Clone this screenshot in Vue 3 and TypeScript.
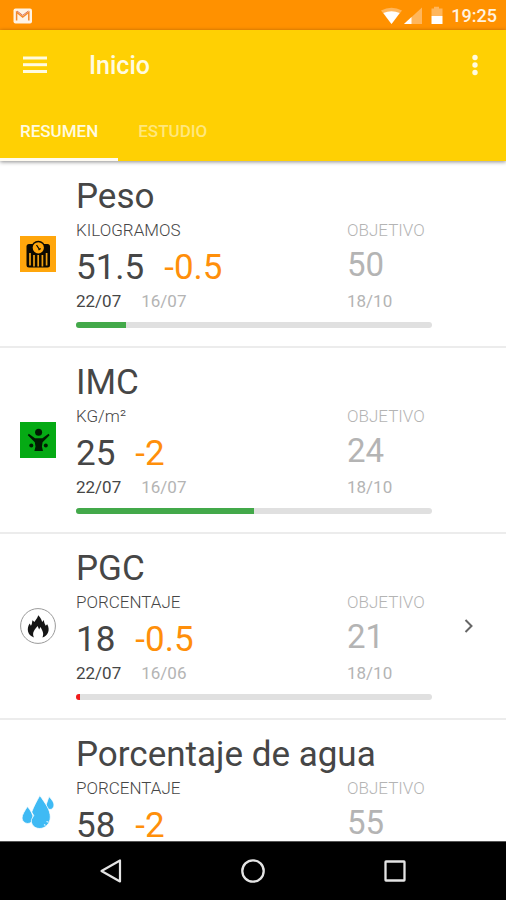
<script setup lang="ts">
import { ref } from 'vue'

type IconName = 'scale' | 'body' | 'fire' | 'water'

interface Metric {
  icon: IconName
  title: string
  unit: string
  value: string
  change: string
  date: string
  previousDate: string
  target: string
  targetDate: string
  progress: number
  tone: 'good' | 'bad'
  expandable?: boolean
}

const tabs = ['RESUMEN', 'ESTUDIO']
const activeTab = ref(0)

const metrics: Metric[] = [
  { icon: 'scale', title: 'Peso', unit: 'KILOGRAMOS', value: '51.5', change: '-0.5', date: '22/07', previousDate: '16/07', target: '50', targetDate: '18/10', progress: 14, tone: 'good' },
  { icon: 'body', title: 'IMC', unit: 'KG/m²', value: '25', change: '-2', date: '22/07', previousDate: '16/07', target: '24', targetDate: '18/10', progress: 50, tone: 'good' },
  { icon: 'fire', title: 'PGC', unit: 'PORCENTAJE', value: '18', change: '-0.5', date: '22/07', previousDate: '16/06', target: '21', targetDate: '18/10', progress: 1, tone: 'bad', expandable: true },
  { icon: 'water', title: 'Porcentaje de agua', unit: 'PORCENTAJE', value: '58', change: '-2', date: '22/07', previousDate: '16/07', target: '55', targetDate: '18/10', progress: 40, tone: 'good' },
]
</script>

<template>
  <div class="screen">
    <div class="status">
      <svg class="mail" width="20" height="16" viewBox="0 0 20 16">
        <rect x="0.5" y="0.5" width="18.5" height="15" rx="2" fill="#fff3e4" />
        <path d="M3.600 12.500V4.200L9.700 9l6.100-4.800v8.300" fill="none" stroke="#f58a2c" stroke-width="1.500" />
        <path d="M4 3l5.700 4.300L15.400 3" fill="none" stroke="#d9735a" stroke-width="1" />
      </svg>
      <div class="status-right">
        <svg width="62" height="20" viewBox="0 0 62 20">
          <path d="M0 4.500Q10.500-1 21 4.500L10.500 18z" fill="#ffb65c" />
          <path d="M2.300 7Q10.500 3.500 18.700 7L10.500 18z" fill="#fff" />
          <path d="M23 18L41 1.500V18z" fill="#ffb65c" />
          <path d="M23 18L30.500 11V18z" fill="#fff" />
          <path d="M50.500 2.500H53V0.800h5v1.700h3.500V10h-11z" fill="#ffb65c" />
          <path d="M50.500 10h11v8h-11z" fill="#fff" />
        </svg>
        <span class="clock">19:25</span>
      </div>
    </div>

    <header class="appbar">
      <div class="toolbar">
        <button class="icon-button" type="button" aria-label="Menú">
          <svg width="24" height="18" viewBox="0 0 24 18" fill="#fffbe0">
            <rect width="24" height="3" y="0.500" /><rect width="24" height="3" y="7.200" /><rect width="24" height="3" y="14" />
          </svg>
        </button>
        <h1>Inicio</h1>
        <button class="icon-button" type="button" aria-label="Más opciones">
          <svg width="8" height="22" viewBox="0 0 8 22" fill="#fffbe0">
            <circle cx="4" cy="3.500" r="2.700" /><circle cx="4" cy="11" r="2.700" /><circle cx="4" cy="18.500" r="2.700" />
          </svg>
        </button>
      </div>
      <div class="tabs" role="tablist">
        <button
          v-for="(tab, i) in tabs"
          :key="tab"
          class="tab"
          :class="{ active: i === activeTab }"
          type="button"
          role="tab"
          :aria-selected="i === activeTab"
          @click="activeTab = i"
        >{{ tab }}</button>
      </div>
    </header>

    <main class="list">
      <article v-for="m in metrics" :key="m.title" class="row">
        <svg v-if="m.icon === 'scale'" class="badge" viewBox="0 0 36 36">
          <rect width="36" height="36" fill="#ffa60c" />
          <rect x="6.500" y="8" width="23.500" height="23.500" rx="2.500" fill="#0c0900" />
          <g stroke="#f0a010" stroke-width="1.700">
            <path d="M10 17v12.500M14 19v11.500M18.200 19v11.500M22.400 19v11.500M26.600 17v12.500" />
          </g>
          <circle cx="18.300" cy="11.800" r="7" fill="#0c0900" />
          <circle cx="18.300" cy="11.800" r="5.600" fill="#ffa60c" />
          <path d="M16.500 9l3 4.500M18.500 14l2.200-1.500" stroke="#0c0900" stroke-width="1.300" />
        </svg>
        <svg v-else-if="m.icon === 'body'" class="badge" viewBox="0 0 36 36">
          <rect width="36" height="36" fill="#05aa14" />
          <g fill="#001c02">
            <circle cx="18.600" cy="10.300" r="3.500" />
            <path d="M8.800 11.800L15 16.300H22.400L28.600 11.800L29.600 13.200L22.600 20.300L21.900 24.500L23 29H14.400L15.500 24.500L14.800 20.300L7.800 13.200z" />
            <circle cx="11.300" cy="23.400" r="2" />
            <circle cx="25.800" cy="23.400" r="2" />
          </g>
        </svg>
        <svg v-else-if="m.icon === 'fire'" class="badge" viewBox="0 0 36 36">
          <circle cx="18" cy="18" r="17.400" fill="#fff" stroke="#9a9a9a" />
          <path d="M14 29.500C7 27 6.500 20 9.700 15.500l1.200 2.300c1.300-1.600 1-3.800 1.600-5.600l1.900 1.700c1.200-2 3-3.600 3.900-6.600 2.300 2.300 3.300 4.500 3.800 6.800l1.900-2c-.2 2.700 1 4 1.700 5.600l1.500-1.500c3.200 5.500.9 11.500-4.800 13.300 2-4-.2-7.400-1.900-10.500l-1.400 2.500-1.500-3.500C15 21.500 11.500 24.500 14 29.500z" fill="#151515" />
        </svg>
        <svg v-else class="badge" viewBox="0 0 36 36">
          <g fill="#3fbaf4" stroke="#fff" stroke-width="0.800">
            <path d="M29 2.500c3.500 3.800 5 6 5 8.500 0 2.700-1.900 4.500-4 4.500-2.800 0-4.300-2.500-3.700-5.200z" />
            <path d="M7.500 12.500c3.500 4.300 5.700 8.500 5.700 11.500 0 3.300-2.500 5.500-5.500 5.500S2 27 2 24c0-3 2.500-7 5.500-11.500z" />
            <path d="M19.800 1.500c6 8.500 10.500 14.500 10.500 21.500 0 6.300-4.700 11.500-10.500 11.500S10.500 30 11.500 25.500l2.200-4-2-3.500c2-5.500 4.800-10.500 8.100-16.500z" />
          </g>
          <path d="M26.500 27.500l2 .6M24 30.500l1.500 1" stroke="#d9f3ff" stroke-width="1.200" />
        </svg>

        <div class="body">
          <h2>{{ m.title }}</h2>
          <div class="columns">
            <div class="current">
              <div class="label">{{ m.unit }}</div>
              <div class="values"><span>{{ m.value }}</span><span class="change">{{ m.change }}</span></div>
              <div class="dates"><span>{{ m.date }}</span><span class="muted">{{ m.previousDate }}</span></div>
            </div>
            <div class="target">
              <div class="label">OBJETIVO</div>
              <div class="goal">{{ m.target }}</div>
              <div class="dates">{{ m.targetDate }}</div>
            </div>
          </div>
          <div class="track" role="progressbar" :aria-valuenow="m.progress" aria-valuemin="0" aria-valuemax="100" :aria-label="m.title">
            <div class="fill" :class="m.tone" :style="{ width: m.progress + '%' }"></div>
          </div>
        </div>

        <div class="action">
          <button v-if="m.expandable" class="icon-button" type="button" aria-label="Ver detalle">
            <svg width="10" height="16" viewBox="0 0 10 16"><path d="M1.500 2L7.500 8l-6 6" fill="none" stroke="#666" stroke-width="2" /></svg>
          </button>
        </div>
      </article>
    </main>

    <nav class="navbar">
      <button class="icon-button" type="button" aria-label="Atrás">
        <svg width="24" height="26" viewBox="0 0 24 26"><path d="M21 2.500v21L2.500 13z" fill="none" stroke="#e4e4e4" stroke-width="2.200" stroke-linejoin="round" /></svg>
      </button>
      <button class="icon-button" type="button" aria-label="Inicio">
        <svg width="26" height="26" viewBox="0 0 26 26"><circle cx="13" cy="13" r="10.700" fill="none" stroke="#e4e4e4" stroke-width="2.300" /></svg>
      </button>
      <button class="icon-button" type="button" aria-label="Recientes">
        <svg width="24" height="24" viewBox="0 0 24 24"><rect x="2.500" y="2.500" width="19" height="19" rx="0.500" fill="none" stroke="#e4e4e4" stroke-width="2.300" /></svg>
      </button>
    </nav>
  </div>
</template>

<style>
body {
  background: #fff;
}
</style>

<style scoped>
.screen {
  display: flex;
  flex-direction: column;
  height: 100vh;
  overflow: hidden;
  background: #fff;
  color: #464646;
  font-family: Roboto, "Liberation Sans", sans-serif;
}
svg {
  display: block;
  flex: none;
}
h1,
h2 {
  margin: 0;
}
.icon-button {
  display: grid;
  place-items: center;
  padding: 0;
  border: 0;
  background: none;
  cursor: pointer;
}
.status {
  display: flex;
  flex: none;
  align-items: center;
  justify-content: space-between;
  height: 30px;
  padding: 2px 9px 0 13px;
  box-sizing: border-box;
  background: #ff9100;
}
.status-right {
  display: flex;
  align-items: center;
  gap: 8px;
}
.clock {
  color: #fff3e0;
  font-size: 18px;
  font-weight: 500;
  line-height: 28px;
}
.appbar {
  position: relative;
  z-index: 1;
  flex: none;
  background: #ffd003;
  box-shadow: 0 1px 4px rgba(0, 0, 0, 0.45);
}
.toolbar {
  display: flex;
  align-items: center;
  height: 70px;
  padding: 0 27px 0 23px;
}
h1 {
  flex: 1;
  padding: 2px 0 0 42px;
  color: #fffbe0;
  font-size: 25px;
  font-weight: 500;
  line-height: 30px;
}
.tabs {
  display: flex;
}
.tab {
  height: 61px;
  padding: 3px 20px 0;
  border: 0;
  border-bottom: 3px solid transparent;
  background: none;
  color: #ffe77d;
  font-family: inherit;
  font-size: 17px;
  font-weight: 500;
  cursor: pointer;
}
.tab.active {
  border-color: #fffbf0;
  color: #fffbe0;
}
.list {
  flex: 1;
  min-height: 0;
  padding-top: 1px;
  overflow: auto;
  scrollbar-width: none;
}
.row {
  display: flex;
  align-items: center;
  padding: 16px 0 17px 20px;
  border-bottom: 2px solid #ececec;
}
.badge {
  width: 36px;
  height: 36px;
  margin-right: 20px;
}
.body {
  flex: 1;
  min-width: 0;
  padding-bottom: 1px;
}
h2 {
  font-size: 35px;
  font-weight: 400;
  line-height: 38px;
}
.columns {
  display: flex;
  justify-content: space-between;
}
.target {
  width: 85px;
  color: #b4b4b4;
}
.label {
  font-size: 17px;
  font-weight: 300;
  line-height: 28px;
}
.values {
  display: flex;
  gap: 20px;
  font-size: 35px;
  line-height: 48px;
}
.change {
  color: #ff8f0a;
}
.goal {
  padding-bottom: 6px;
  font-size: 33px;
  line-height: 42px;
}
.dates {
  display: flex;
  gap: 20px;
  font-size: 17px;
  line-height: 18px;
}
.muted {
  color: #b4b4b4;
}
.track {
  height: 6px;
  margin-top: 12px;
  overflow: hidden;
  border-radius: 3px;
  background: #e0e0e0;
}
.fill {
  height: 100%;
}
.good {
  background: #43a94a;
}
.bad {
  background: #f21b1b;
}
.action {
  display: grid;
  width: 74px;
  place-items: center;
}
.navbar {
  display: grid;
  grid-template-columns: repeat(3, 142px);
  flex: none;
  justify-content: center;
  height: 58px;
  border-top: 1px solid #555;
  background: #000;
}
</style>
